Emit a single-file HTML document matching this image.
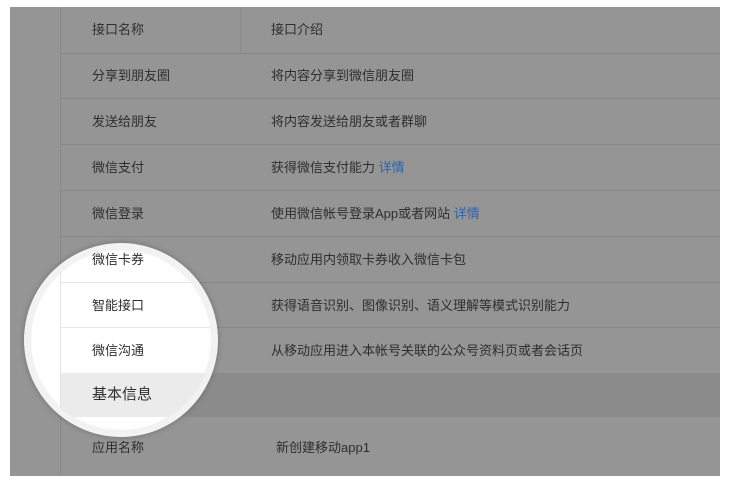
<!DOCTYPE html>
<html><head><meta charset="utf-8"><style>
*{margin:0;padding:0;box-sizing:border-box}
body{width:730px;height:484px;background:#fff;position:relative;overflow:hidden;font-family:"Liberation Sans","Noto Sans CJK SC",sans-serif;font-size:13px;color:#2e2e2e}
.panel{position:absolute;left:10px;top:7px;width:710px;height:469px;background:#959595;overflow:hidden}
.l{position:absolute;left:50px;right:0;height:1px;background:#878787}
.v{position:absolute;left:50px;top:0;bottom:0;width:1px;background:#8a8a8a}
.t{position:absolute;line-height:16px;white-space:nowrap}
.band{position:absolute;left:51px;right:0;top:366px;height:44px;background:#8b8b8b}
.ring{position:absolute;left:24px;top:243px;width:194px;height:194px;border-radius:50%;background:#f2f2f2;box-shadow:0 0 6px rgba(0,0,0,.25)}
.inner{position:absolute;left:30px;top:249px;width:182px;height:182px;border-radius:50%;overflow:hidden;background:#fff;box-shadow:inset 0 0 2px rgba(0,0,0,.15)}
.ic{position:absolute;left:-30px;top:-249px;width:730px;height:484px}
.il{position:absolute;left:60px;width:200px;height:1px;background:#e6e6e6}
</style></head><body>
<div class="panel">
<div class="v"></div>
<div style="position:absolute;left:230px;top:0;width:1px;height:46px;background:#8a8a8a"></div>
<div class="l" style="top:46px"></div>
<div class="l" style="top:91px"></div>
<div class="l" style="top:137px"></div>
<div class="l" style="top:183px"></div>
<div class="l" style="top:229px"></div>
<div class="l" style="top:275px"></div>
<div class="l" style="top:320px"></div>
<div class="band"></div>
<div class="t" style="left:82px;top:15px">接口名称</div><div class="t" style="left:261px;top:15px">接口介绍</div>
<div class="t" style="left:82px;top:61px">分享到朋友圈</div><div class="t" style="left:261px;top:61px">将内容分享到微信朋友圈</div>
<div class="t" style="left:82px;top:107px">发送给朋友</div><div class="t" style="left:261px;top:107px">将内容发送给朋友或者群聊</div>
<div class="t" style="left:82px;top:153px">微信支付</div><div class="t" style="left:261px;top:153px">获得微信支付能力 <span style="color:#2a64b0">详情</span></div>
<div class="t" style="left:82px;top:199px">微信登录</div><div class="t" style="left:261px;top:199px">使用微信帐号登录App或者网站 <span style="color:#2a64b0">详情</span></div>
<div class="t" style="left:82px;top:245px">微信卡券</div><div class="t" style="left:261px;top:245px">移动应用内领取卡券收入微信卡包</div>
<div class="t" style="left:82px;top:291px">智能接口</div><div class="t" style="left:261px;top:291px">获得语音识别、图像识别、语义理解等模式识别能力</div>
<div class="t" style="left:82px;top:336px">微信沟通</div><div class="t" style="left:261px;top:336px">从移动应用进入本帐号关联的公众号资料页或者会话页</div>
<div class="t" style="left:82px;top:433px">应用名称</div><div class="t" style="left:266px;top:433px">新创建移动app1</div>
</div>
<div class="ring"></div>
<div class="inner"><div class="ic">
<div style="position:absolute;left:60px;top:0;bottom:0;width:1px;background:#e4e4e4"></div>
<div class="il" style="top:236px"></div>
<div class="il" style="top:282px"></div>
<div class="il" style="top:327px"></div>
<div style="position:absolute;left:61px;top:373px;width:200px;height:44px;background:#ebebeb"></div>
<div class="t" style="left:92px;top:252px">微信卡券</div>
<div class="t" style="left:92px;top:298px">智能接口</div>
<div class="t" style="left:92px;top:343px">微信沟通</div>
<div class="t" style="left:92px;top:387px;font-size:15px">基本信息</div>
<div class="t" style="left:92px;top:440px">应用名称</div>
</div></div>
</body></html>
